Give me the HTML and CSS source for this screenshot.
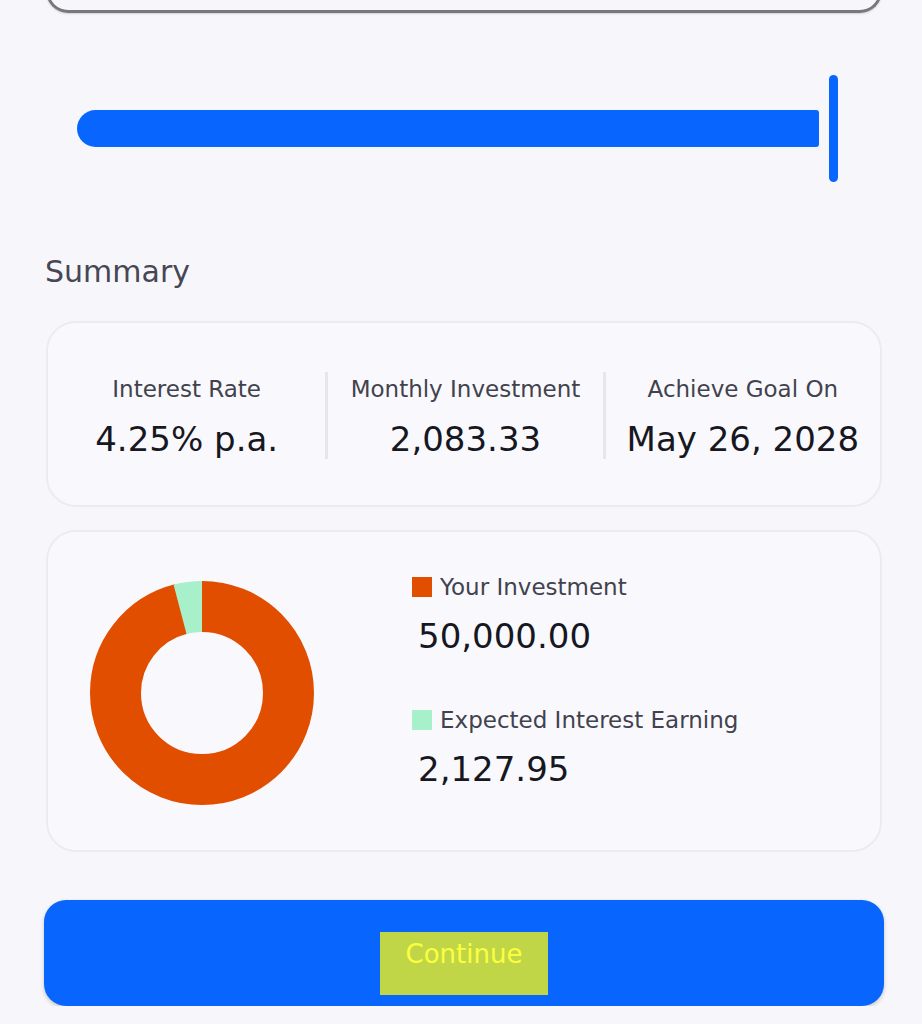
FILE: index.html
```html
<!DOCTYPE html>
<html lang="en">
<head>
    <meta charset="UTF-8">
    <title>Goal Summary</title>
    <link rel="stylesheet" href="styles.css">
</head>
<body>
    <div class="page">
        <div class="amount-box"></div>

        <div class="slider">
            <div class="slider-track"></div>
            <div class="slider-thumb"></div>
        </div>

        <h2 class="section-title">Summary</h2>

        <div class="card stats">
            <div class="stat">
                <div class="stat-label">Interest Rate</div>
                <div class="stat-value">4.25% p.a.</div>
            </div>
            <div class="stat">
                <div class="stat-label">Monthly Investment</div>
                <div class="stat-value">2,083.33</div>
            </div>
            <div class="stat">
                <div class="stat-label">Achieve Goal On</div>
                <div class="stat-value">May 26, 2028</div>
            </div>
        </div>

        <div class="card breakdown">
            <svg class="donut" width="224" height="224" viewBox="0 0 224 224">
                <!-- investment 50,000 vs interest 2,127.95 -->
                <circle cx="112" cy="112" r="86.5" fill="none" stroke="#e24e00" stroke-width="51"
                        stroke-dasharray="521.3 600" transform="rotate(-90 112 112)"/>
                <circle cx="112" cy="112" r="86.5" fill="none" stroke="#a8f0c9" stroke-width="51"
                        stroke-dasharray="22.2 600" transform="rotate(-104.7 112 112)"/>
            </svg>
            <div class="legend">
                <div class="legend-label"><span class="swatch swatch-invest"></span>Your Investment</div>
                <div class="legend-value">50,000.00</div>
                <div class="legend-label second"><span class="swatch swatch-interest"></span>Expected Interest Earning</div>
                <div class="legend-value">2,127.95</div>
            </div>
        </div>

        <button type="button" class="button-primary"><span class="highlight">Continue</span></button>
    </div>
</body>
</html>
```

FILE: styles.css
```css
body {
    margin: 0;
    background-color: #f7f7fb;
    font-family: "DejaVu Sans", Verdana, sans-serif;
    color: #1a1a22;
    overflow: hidden;
}
.page {
    padding: 0 38px 0 44px;
}
.amount-box {
    height: 40px;
    margin: -30px 2px 0;
    border: 3px solid #77777f;
    border-top: none;
    border-radius: 0 0 22px 22px;
    box-shadow: 0 1px 2px rgba(0,0,0,0.15);
}
.slider {
    display: flex;
    align-items: center;
    gap: 10px;
    height: 107px;
    margin: 62px 46px 0 33px;
}
.slider-track {
    flex: 1;
    height: 37px;
    background-color: #0866ff;
    border-radius: 19px 3px 3px 19px;
}
.slider-thumb {
    width: 9px;
    height: 107px;
    background-color: #0866ff;
    border-radius: 5px;
}
.section-title {
    font-size: 30px;
    font-weight: 400;
    line-height: 36px;
    color: #474754;
    margin: 72px 0 31px 1px;
}
.card {
    margin: 0 2px;
    background-color: #f9f9fd;
    border: 2px solid #ebebf4;
    border-radius: 30px;
}
.stats {
    display: grid;
    grid-template-columns: repeat(3, 1fr);
    padding: 49px 0 46px;
}
.stat {
    text-align: center;
    padding-top: 3px;
}
.stat + .stat {
    border-left: 3px solid #e6e6ee;
}
.stat-label {
    font-size: 23px;
    line-height: 28px;
    color: #42424e;
}
.stat-value {
    font-size: 34px;
    line-height: 40px;
    margin-top: 16px;
    color: #17171f;
}
.breakdown {
    display: flex;
    align-items: flex-start;
    gap: 98px;
    margin-top: 23px;
    padding: 41px 0 45px 42px;
}
.donut {
    display: block;
    margin-top: 8px;
}
.legend-label {
    display: flex;
    align-items: center;
    gap: 8px;
    font-size: 23px;
    line-height: 28px;
    color: #42424e;
}
.legend-label.second {
    margin-top: 50px;
}
.swatch {
    width: 20px;
    height: 20px;
}
.swatch-invest {
    background-color: #e24e00;
}
.swatch-interest {
    background-color: #a8f0c9;
}
.legend-value {
    font-size: 34px;
    line-height: 40px;
    margin: 15px 0 0 6px;
    color: #17171f;
}
.button-primary {
    display: flex;
    justify-content: center;
    align-items: flex-start;
    width: 840px;
    height: 106px;
    margin-top: 48px;
    padding: 32px 0 0;
    border: none;
    border-radius: 22px;
    background-color: #0866ff;
    box-shadow: 0 2px 4px rgba(0,0,0,0.2);
    font-family: "DejaVu Sans", Verdana, sans-serif;
    cursor: pointer;
}
.highlight {
    padding: 7px 26px 26px;
    background-color: #c1d647;
    color: #fbff3f;
    font-size: 26px;
    line-height: 30px;
}
```
